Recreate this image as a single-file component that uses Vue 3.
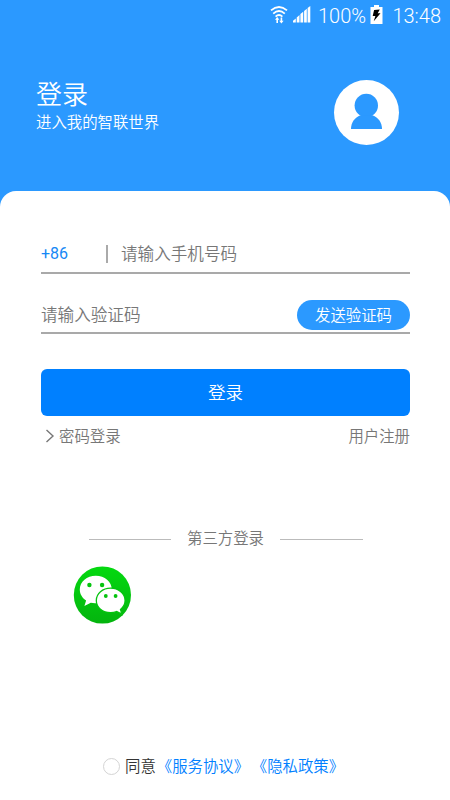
<script setup>
const thirdPartyLabel = '第三方登录'
</script>

<template>
  <div class="screen">
    <div class="status">
      <svg class="wifi" viewBox="0 0 18 20" width="18" height="20">
        <g fill="none" stroke="#fff" stroke-width="1.8">
          <path d="M1 5.4Q9-1.4 17 5.4" />
          <path d="M3.2 8.6Q9 3.4 14.8 8.6" />
          <path d="M5.6 11.6Q9 8.4 12.4 11.6" />
        </g>
        <path fill="#fff" d="M7.2 12 9.4 14.8H8V18H6.4V14.8H5ZM11.4 18.6 9.2 15.8H10.6V12.6H12.2V15.8H13.6Z" />
      </svg>
      <svg class="signal" viewBox="0 0 18 17" width="18" height="17">
        <path fill="#fff" d="M0 16.5V14.8L2.8 12.5V16.5ZM3.7 16.5V11.4L6.5 9.1V16.5ZM7.4 16.5V8L10.2 5.7V16.5ZM11.1 16.5V5L13.8 2.8V16.5ZM14.6 16.5V2L17.3 0V16.5Z" />
      </svg>
      <span class="percent">100%</span>
      <svg class="battery" viewBox="0 0 13 19" width="13" height="19">
        <path fill="#fff" d="M4 0H9V2H12.5V19H.5V2H4Z" />
        <path fill="#000" d="M4.1 5 9.8 4.5 7.7 8.3H10.5L3.7 16.3 5.4 11H2.7Z" />
      </svg>
      <span class="time">13:48</span>
    </div>

    <header class="header">
      <div>
        <h1>登录</h1>
        <p>进入我的智联世界</p>
      </div>
      <div class="avatar">
        <svg viewBox="0 0 65 65" width="65" height="65">
          <circle cx="32.3" cy="25.4" r="11.7" />
          <path d="M17 49C17 42.5 20.5 37.5 26.5 35.2H38.5C44.5 37.5 48 42.5 48 49Z" />
        </svg>
      </div>
    </header>

    <main class="card">
      <div class="field phone">
        <span class="code">+86</span>
        <span class="divider"></span>
        <span class="hint">请输入手机号码</span>
      </div>
      <div class="field verify">
        <span class="hint">请输入验证码</span>
        <button class="send">发送验证码</button>
      </div>
      <button class="login">登录</button>
      <div class="links">
        <a class="password">
          <svg viewBox="0 0 10 14" width="10" height="14"><path d="M1.5 1 8 7 1.5 13" /></svg>
          <span>密码登录</span>
        </a>
        <a>用户注册</a>
      </div>

      <div class="third">
        <i></i><span>{{ thirdPartyLabel }}</span><i></i>
      </div>
      <div class="providers">
        <svg viewBox="0 0 58 58" width="58" height="58">
          <defs>
            <linearGradient id="wechat" x1="0" y1="0" x2="0" y2="1">
              <stop offset="0" stop-color="#04d910" />
              <stop offset="1" stop-color="#04b40e" />
            </linearGradient>
          </defs>
          <circle cx="29.4" cy="29" r="28.6" fill="url(#wechat)" />
          <g transform="translate(.6 0)">
            <path fill="#fff" d="M22.2 9.8C13.3 9.8 6.2 15.9 6.2 23.5C6.2 28.3 8.8 32 12.5 34.5L10.8 40L17.2 36.8Q20 37.5 23.5 37.2C31.7 37.2 38.2 31 38.2 23.5C38.2 15.9 31.1 9.8 22.2 9.8Z" />
            <path fill="#fff" stroke="#05c40f" stroke-width="1.3" d="M37 22.2C29 22.2 22.7 27.7 22.7 34.6C22.7 41.5 29 46.7 37 46.7Q40.2 46.7 43 45.5L48.3 48.2L46.9 43.4C49.9 41.1 51.5 38 51.5 34.6C51.5 27.7 45 22.2 37 22.2Z" />
            <g fill="#05c40f">
              <circle cx="15.8" cy="19" r="2.2" />
              <circle cx="28.5" cy="19" r="2.2" />
              <circle cx="32.2" cy="30" r="1.9" />
              <circle cx="42" cy="30" r="1.9" />
            </g>
          </g>
        </svg>
      </div>

      <footer class="agreement">
        <span class="radio"></span>
        <span class="agree">同意</span>
        <a>《服务协议》</a>
        <a>《隐私政策》</a>
      </footer>
    </main>
  </div>
</template>

<style>
body {
  margin: 0;
}
</style>

<style scoped>
.screen {
  display: flex;
  flex-direction: column;
  width: 450px;
  height: 800px;
  overflow: hidden;
  background: #2b99ff;
  color: #777;
  font-family: Roboto, "Noto Sans CJK SC", sans-serif;
  font-size: 15.4px;
  font-weight: 350;
  white-space: nowrap;
}
.status {
  display: flex;
  box-sizing: border-box;
  height: 32px;
  padding: 5px 9px 0 270px;
  color: #fff;
  font-size: 20px;
  font-weight: 350;
  line-height: 22px;
}
.wifi {
  flex: none;
  margin-right: 5px;
}
.signal {
  flex: none;
  margin: 1px 7px 0 0;
}
.percent {
  width: 52px;
}
.battery {
  flex: none;
}
.time {
  margin-left: auto;
}
.header {
  display: flex;
  box-sizing: border-box;
  justify-content: space-between;
  height: 159px;
  padding: 44px 51px 0 36px;
  color: #fff;
}
h1 {
  margin: 0;
  padding-top: 1px;
  font-size: 26px;
  font-weight: 350;
  line-height: 36px;
}
p {
  margin: 0;
  line-height: 20px;
}
.avatar {
  width: 65px;
  height: 65px;
  margin-top: 4px;
  border-radius: 50%;
  background: #fff;
}
.avatar svg {
  display: block;
  fill: #2b99ff;
}
.card {
  display: flex;
  flex: 1;
  flex-direction: column;
  padding: 0 40px 0 41px;
  border-radius: 16px 16px 0 0;
  background: #fff;
}
.field {
  display: flex;
  box-sizing: border-box;
  align-items: center;
  border-bottom: 2px solid #a9a9a9;
}
.phone {
  height: 43px;
  margin-top: 40px;
  padding-top: 4px;
}
.phone .hint {
  margin-top: -2px;
}
.verify {
  justify-content: space-between;
  height: 60px;
  padding-top: 24px;
}
.verify .hint {
  margin-top: -3px;
}
.code {
  width: 65px;
  color: #1688f5;
  font-size: 16px;
  font-weight: 400;
}
.divider {
  width: 2px;
  height: 18px;
  margin-right: 13px;
  background: #aaa;
}
.hint {
  font-size: 16.6px;
}
button {
  padding: 0;
  border: 0;
  color: #fff;
  font-family: inherit;
  font-weight: 350;
}
.send {
  width: 113px;
  height: 30px;
  padding-bottom: 2px;
  border-radius: 15px;
  background: #2b99ff;
  font-size: 15.4px;
}
.login {
  height: 47px;
  margin-top: 35px;
  padding-bottom: 2px;
  border-radius: 6px;
  background: #0080ff;
  font-size: 17.5px;
}
.links {
  display: flex;
  justify-content: space-between;
  margin-top: 10px;
  line-height: 22px;
}
.password {
  display: flex;
  align-items: center;
  gap: 4px;
  padding-left: 4px;
}
.password svg {
  margin-top: -2px;
  fill: none;
  stroke: #777;
  stroke-width: 1.4;
}
.third {
  display: flex;
  align-items: center;
  gap: 16px;
  margin: 80px 0 0 48px;
  line-height: 22px;
}
.third i {
  width: 82px;
  height: 1px;
  background: #bbb;
}
.third i:last-child {
  width: 83px;
}
.providers {
  height: 58px;
  margin: 16px 0 0 32px;
}
.agreement {
  display: flex;
  align-items: center;
  margin: 132px 0 0 62px;
  line-height: 22px;
}
.radio {
  box-sizing: border-box;
  width: 17px;
  height: 17px;
  margin: -1px 5px 0 0;
  border: 1px solid #d4d4d4;
  border-radius: 50%;
}
.agree {
  margin-right: 1px;
  color: #333;
}
.agreement a {
  margin-right: 2.6px;
  color: #0080ff;
}
</style>
